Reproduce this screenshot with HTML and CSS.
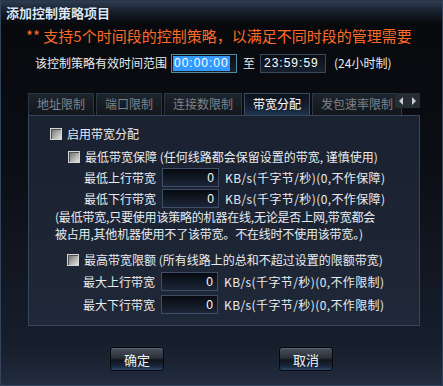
FILE: index.html
```html
<!DOCTYPE html>
<html lang="zh-CN">
<head>
    <meta charset="UTF-8">
    <title>添加控制策略项目</title>
    <link rel="stylesheet" href="styles.css">
</head>
<body>
    <div class="window">
        <!-- Title -->
        <div class="titlebar">添加控制策略项目</div>

        <p class="notice">** 支持5个时间段的控制策略，以满足不同时段的管理需要</p>

        <!-- Time range -->
        <div class="time-row">
            <span class="time-label">该控制策略有效时间范围</span>
            <div class="time-field active"><span class="sel">00:00:00</span></div>
            <span class="to">至</span>
            <div class="time-field">23:59:59</div>
            <span class="hint">(24小时制)</span>
        </div>

        <!-- Tabs -->
        <div class="tabs">
            <div class="tab">地址限制</div>
            <div class="tab">端口限制</div>
            <div class="tab">连接数限制</div>
            <div class="tab current">带宽分配</div>
            <div class="tab">发包速率限制</div>
            <div class="tab-arrows">
                <span class="arrow left"></span>
                <span class="arrow right"></span>
            </div>
        </div>

        <!-- Bandwidth panel -->
        <div class="panel">
            <label class="check main"><span class="box"></span>启用带宽分配</label>

            <label class="check sub"><span class="box"></span>最低带宽保障 (任何线路都会保留设置的带宽, 谨慎使用)</label>
            <div class="field-row first">
                <span class="field-label">最低上行带宽</span>
                <input class="num" type="text" value="0">
                <span class="unit">KB/s(千字节/秒)(0,不作保障)</span>
            </div>
            <div class="field-row">
                <span class="field-label">最低下行带宽</span>
                <input class="num" type="text" value="0">
                <span class="unit">KB/s(千字节/秒)(0,不作保障)</span>
            </div>

            <p class="note">(最低带宽,只要使用该策略的机器在线,无论是否上网,带宽都会<br>被占用,其他机器使用不了该带宽。不在线时不使用该带宽。)</p>

            <label class="check sub max"><span class="box"></span>最高带宽限额 (所有线路上的总和不超过设置的限额带宽)</label>
            <div class="field-row wide">
                <span class="field-label">最大上行带宽</span>
                <input class="num" type="text" value="0">
                <span class="unit">KB/s(千字节/秒)(0,不作限制)</span>
            </div>
            <div class="field-row wide">
                <span class="field-label">最大下行带宽</span>
                <input class="num" type="text" value="0">
                <span class="unit">KB/s(千字节/秒)(0,不作限制)</span>
            </div>
        </div>

        <!-- Buttons -->
        <div class="actions">
            <button class="btn">确定</button>
            <button class="btn">取消</button>
        </div>
    </div>
</body>
</html>
```

FILE: styles.css
```css
* {
    box-sizing: border-box;
}

body {
    margin: 0;
    padding: 0;
    background-color: #000;
    font-family: "Noto Sans CJK SC", "Liberation Sans", sans-serif;
    font-size: 12px;
    color: #e8ecf0;
}

.window {
    width: 443px;
    height: 386px;
    overflow: hidden;
    border: 1px solid #34445a;
    border-top-color: #2a3648;
    background: linear-gradient(#07090c 0, #0a0d13 40%, #171e2c 90%, #222c3d 100%);
}

/* Title bar */
.titlebar {
    height: 24px;
    padding-left: 5px;
    line-height: 23px;
    font-size: 13px;
    font-weight: bold;
    color: #d8e6f8;
    text-shadow: 0 1px 1px #000;
    background: linear-gradient(#2e3c52 0, #161e2a 45%, #07090c 100%);
}

.notice {
    margin: 3px 0 0 25px;
    line-height: 16px;
    font-size: 15px;
    color: #ff6b26;
}

/* Time range */
.time-row {
    display: flex;
    align-items: center;
    height: 20px;
    margin-top: 9px;
    padding-left: 34px;
    line-height: 16px;
}

.time-label {
    width: 136px;
}

.time-field {
    width: 66px;
    height: 19px;
    padding-left: 3px;
    line-height: 17px;
    font-family: "Liberation Sans", sans-serif;
    letter-spacing: 1px;
    color: #fff;
    border: 1px solid #3a4a5c;
    background: linear-gradient(#0a0e14, #182030);
}

.time-field.active {
    border-color: #4e8ca0;
    padding-left: 1px;
}

.time-field .sel {
    display: inline-block;
    padding: 0 1px;
    line-height: 15px;
    background-color: #3399ff;
}

.to {
    margin: 0 5px 0 6px;
}

.hint {
    margin-left: 8px;
}

/* Tabs */
.tabs {
    position: relative;
    display: flex;
    gap: 2px;
    width: 392px;
    height: 22px;
    margin: 20px 0 0 27px;
    overflow: hidden;
}

.tab {
    flex-shrink: 0;
    height: 22px;
    padding: 0 8px;
    line-height: 20px;
    color: #7e848c;
    border: 1px solid #2c3644;
    border-bottom: none;
    background: linear-gradient(#1e242c, #12161c);
}

.tab.current {
    color: #fff;
    border-color: #3c4c62;
    background: linear-gradient(#0c121a 0, #142032 60%, #1e3250 100%);
}

.tab-arrows {
    position: absolute;
    top: 0;
    right: 0;
    display: flex;
    align-items: center;
    justify-content: space-around;
    width: 25px;
    height: 15px;
    background-color: #262c34;
}

.arrow {
    width: 0;
    height: 0;
    border-top: 4px solid transparent;
    border-bottom: 4px solid transparent;
}

.arrow.left {
    border-right: 4px solid #c8ccd0;
}

.arrow.right {
    border-left: 4px solid #c8ccd0;
}

/* Panel */
.panel {
    height: 211px;
    margin-left: 27px;
    width: 392px;
    padding: 10px 0 0 21px;
    border: 1px solid #38465a;
    background: linear-gradient(#1a2130, #1f2838);
}

.check {
    display: flex;
    align-items: center;
    height: 16px;
    line-height: 16px;
}

.check .box {
    width: 12px;
    height: 12px;
    margin-right: 5px;
    border: 1px solid #d4d4d4;
    box-shadow: inset 1px 1px 0 #505050;
    background: linear-gradient(135deg, #6a6a6a, #e4e4e4);
}

.check.sub {
    margin: 7px 0 0 18px;
}

.check.max {
    margin: 10px 0 0 17px;
}

.field-row {
    display: flex;
    align-items: center;
    height: 19px;
    margin: 2px 0 0 34px;
}

.field-row.first {
    margin-top: 3px;
}

.field-row.wide {
    margin: 4px 0 0 33px;
}

.field-label {
    width: 78px;
}

.num {
    width: 57px;
    height: 19px;
    padding: 0 4px;
    text-align: right;
    font-family: "Liberation Sans", sans-serif;
    font-size: 12px;
    color: #fff;
    border: 1px solid #3e4e66;
    background: linear-gradient(#070a10, #1c2638);
    outline: none;
}

.unit {
    margin-left: 6px;
    letter-spacing: 0.4px;
}

.note {
    margin: 0 0 0 5px;
    line-height: 17px;
    letter-spacing: -0.2px;
}

/* Buttons */
.actions {
    display: flex;
    gap: 115px;
    padding: 21px 0 0 109px;
}

.btn {
    width: 54px;
    height: 24px;
    padding: 0;
    font-family: "Noto Sans CJK SC", sans-serif;
    font-size: 13px;
    color: #f0f4f8;
    border: 1px solid #05070a;
    border-radius: 3px;
    box-shadow: inset 0 1px 0 #5a6270, 0 0 1px #2a4a70;
    background: linear-gradient(#4a525e 0, #2a3038 45%, #12161c 55%, #1a2a40 85%, #2c4a6c 100%);
    cursor: pointer;
}
```
